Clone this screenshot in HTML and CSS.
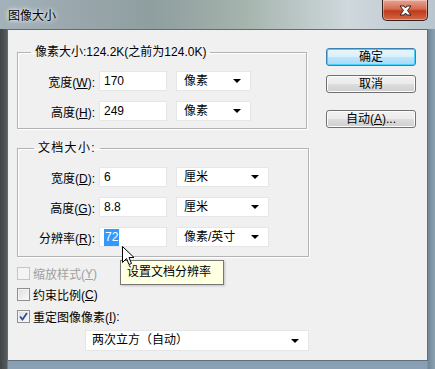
FILE: index.html
```html
<!DOCTYPE html>
<html lang="zh-CN">
<head>
    <meta charset="UTF-8">
    <title>图像大小</title>
    <link rel="stylesheet" href="styles.css">
</head>
<body>
    <div class="titlebar">
        <span class="title">图像大小</span>
        <div class="close">
            <svg width="17" height="11" viewBox="0 0 17 11">
                <path d="M3 1 L7 1 L8.5 3 L10 1 L14 1 L10.5 5.5 L14 10 L10 10 L8.5 8 L7 10 L3 10 L6.5 5.5 Z" fill="#fff" stroke="#3a1a14" stroke-width="1"/>
            </svg>
        </div>
    </div>

    <div class="client">
        <div class="main">
            <fieldset class="group pixel">
                <legend>像素大小:124.2K(之前为124.0K)</legend>
                <div class="row">
                    <span class="label">宽度(<u>W</u>):</span>
                    <div class="field">170</div>
                    <div class="select">像素<i class="arrow"></i></div>
                </div>
                <div class="row">
                    <span class="label">高度(<u>H</u>):</span>
                    <div class="field">249</div>
                    <div class="select">像素<i class="arrow"></i></div>
                </div>
            </fieldset>

            <fieldset class="group doc">
                <legend class="spaced">文档大小:</legend>
                <div class="row">
                    <span class="label">宽度(<u>D</u>):</span>
                    <div class="field">6</div>
                    <div class="select">厘米<i class="arrow"></i></div>
                </div>
                <div class="row">
                    <span class="label">高度(<u>G</u>):</span>
                    <div class="field">8.8</div>
                    <div class="select">厘米<i class="arrow"></i></div>
                </div>
                <div class="row">
                    <span class="label">分辨率(<u>R</u>):</span>
                    <div class="field"><span class="selected">72</span></div>
                    <div class="select">像素/英寸<i class="arrow"></i></div>
                </div>
            </fieldset>

            <div class="checks">
                <div class="check disabled"><span class="box"></span>缩放样式(<u>Y</u>)</div>
                <div class="check"><span class="box"></span>约束比例(<u>C</u>)</div>
                <div class="check"><span class="box checked">
                    <svg width="9" height="9" viewBox="0 0 9 9"><path d="M1 4.5 L3.5 7.5 L8 1" fill="none" stroke="#2a4f9a" stroke-width="1.8"/></svg>
                </span>重定图像像素(<u>I</u>):</div>
            </div>

            <div class="resample">
                <div class="select wide">两次立方（自动）<i class="arrow"></i></div>
            </div>
        </div>

        <div class="buttons">
            <div class="btn default">确定</div>
            <div class="btn">取消</div>
            <div class="btn auto">自动(<u>A</u>)...</div>
        </div>
    </div>

    <div class="tooltip">设置文档分辨率</div>
    <svg class="cursor" width="13" height="21" viewBox="0 0 13 21">
        <path d="M0.5 0.5 L0.5 16.5 L4.5 12.5 L7 18.5 L9.5 17.5 L7 11.5 L12 11.5 Z" fill="#fff" stroke="#000" stroke-width="1"/>
    </svg>
</body>
</html>
```

FILE: styles.css
```css
body {
    margin: 0;
    width: 435px;
    height: 369px;
    position: relative;
    overflow: hidden;
    font-family: "Liberation Sans", "Noto Sans CJK SC", sans-serif;
    font-size: 12px;
    color: #000;
    background:
        linear-gradient(90deg, #3f4447 0px, #555b5f 7px, transparent 8px, transparent 427px, #6f8799 428px, #8ba2b2 435px),
        linear-gradient(180deg, #8d9ca6 0px, #7e8c94 30px, #67727a 200px, #8aa0b4 369px);
}
.titlebar {
    height: 29px;
    display: flex;
    align-items: flex-start;
    justify-content: space-between;
    background: linear-gradient(90deg, #a4b1ba 0%, #8f9e9f 35%, #a3b2ab 55%, #cfd8dc 80%, #b9c6cf 100%);
}
.title {
    padding: 8px 0 0 8px;
    font-size: 12px;
    line-height: 16px;
    text-shadow: 0 0 6px #fff, 0 0 3px #fff;
}
.close {
    width: 44px;
    height: 20px;
    margin-right: 7px;
    display: flex;
    align-items: center;
    justify-content: center;
    border: 1px solid #3b1e1a;
    border-top: none;
    border-radius: 0 0 5px 5px;
    background: linear-gradient(180deg, #e8a493 0%, #d46a50 45%, #c0391d 55%, #d26a4a 100%);
    box-shadow: inset 0 0 0 1px rgba(255,255,255,0.35);
}
.client {
    margin: 0 7px;
    height: 332px;
    box-sizing: border-box;
    border: 1px solid #5f6e7a;
    background: #f0f0f0;
    display: flex;
}
.main {
    padding: 14px 0 0 9px;
}
fieldset.group {
    margin: 0;
    padding: 0;
    border: 1px solid #b3b3b3;
    box-shadow: inset 1px 1px 0 #fff, 1px 1px 0 #fff;
}
.group legend {
    margin-left: 13px;
    padding: 0 4px;
    line-height: 16px;
}
.group legend.spaced {
    letter-spacing: 1.3px;
    margin-left: 16px;
}
.pixel {
    width: 288px;
    padding-bottom: 7px !important;
}
.doc {
    width: 290px;
    margin-top: 11px !important;
    padding-bottom: 9px !important;
}
.row {
    display: flex;
    align-items: center;
    height: 20px;
    margin-top: 10px;
}
.pixel .row:first-of-type,
.doc .row:first-of-type {
    margin-top: 11px;
}
.label {
    width: 77px;
    text-align: right;
    white-space: nowrap;
}
.field {
    width: 68px;
    height: 20px;
    margin-left: 4px;
    box-sizing: border-box;
    padding-left: 4px;
    line-height: 19px;
    background: #fff;
    border: 1px solid #e6e6e6;
}
.selected {
    background: #3399ff;
    color: #fff;
    padding: 1px 1px 2px;
}
.select {
    width: 75px;
    height: 20px;
    margin-left: 9px;
    box-sizing: border-box;
    padding: 0 9px 0 7px;
    line-height: 19px;
    background: #fff;
    border: 1px solid #e6e6e6;
    display: flex;
    align-items: center;
    justify-content: space-between;
}
.doc .select {
    width: 93px;
}
.arrow {
    width: 0;
    height: 0;
    border-left: 4px solid transparent;
    border-right: 4px solid transparent;
    border-top: 4px solid #000;
}
.checks {
    margin-top: 6px;
}
.check {
    display: flex;
    align-items: center;
    height: 21px;
    white-space: nowrap;
}
.check:last-child {
    margin-top: 1px;
}
.check .box {
    width: 13px;
    height: 13px;
    margin-right: 3px;
    box-sizing: border-box;
    border: 1px solid #8e8f8f;
    background: linear-gradient(135deg, #dcdcdc, #fbfbfb);
    box-shadow: inset 0 0 0 1px #f4f4f4;
    display: flex;
    align-items: center;
    justify-content: center;
}
.check.disabled {
    color: #a0a0a0;
}
.check.disabled .box {
    border-color: #c6c6c6;
    background: #f4f4f4;
}
.resample {
    margin-top: 3px;
    padding-left: 68px;
}
.select.wide {
    width: 224px;
    height: 21px;
    margin-left: 0;
    padding-left: 6px;
}
.buttons {
    margin-left: 17px;
    padding-top: 18px;
    display: flex;
    flex-direction: column;
}
.btn {
    width: 90px;
    height: 18px;
    box-sizing: border-box;
    border: 1px solid #707070;
    border-radius: 3px;
    text-align: center;
    line-height: 16px;
    background: linear-gradient(180deg, #f2f2f2 0%, #ebebeb 50%, #dddddd 51%, #cfcfcf 100%);
    box-shadow: inset 0 0 0 1px #fcfcfc;
    margin-bottom: 9px;
}
.btn.default {
    border-color: #3c7fb1;
    background: linear-gradient(180deg, #eaf6fd 0%, #d9f0fc 50%, #bee6fd 51%, #a7d9f5 100%);
    box-shadow: inset 0 0 0 1px #48d1fd;
}
.btn.auto {
    margin-top: 8px;
}
.tooltip {
    position: absolute;
    left: 120px;
    top: 260px;
    width: 104px;
    height: 25px;
    box-sizing: border-box;
    padding-left: 6px;
    line-height: 23px;
    background: #ffffe1;
    border: 1px solid #767676;
    box-shadow: 1px 1px 2px rgba(0,0,0,0.2);
}
.cursor {
    position: absolute;
    left: 122px;
    top: 246px;
}
```
